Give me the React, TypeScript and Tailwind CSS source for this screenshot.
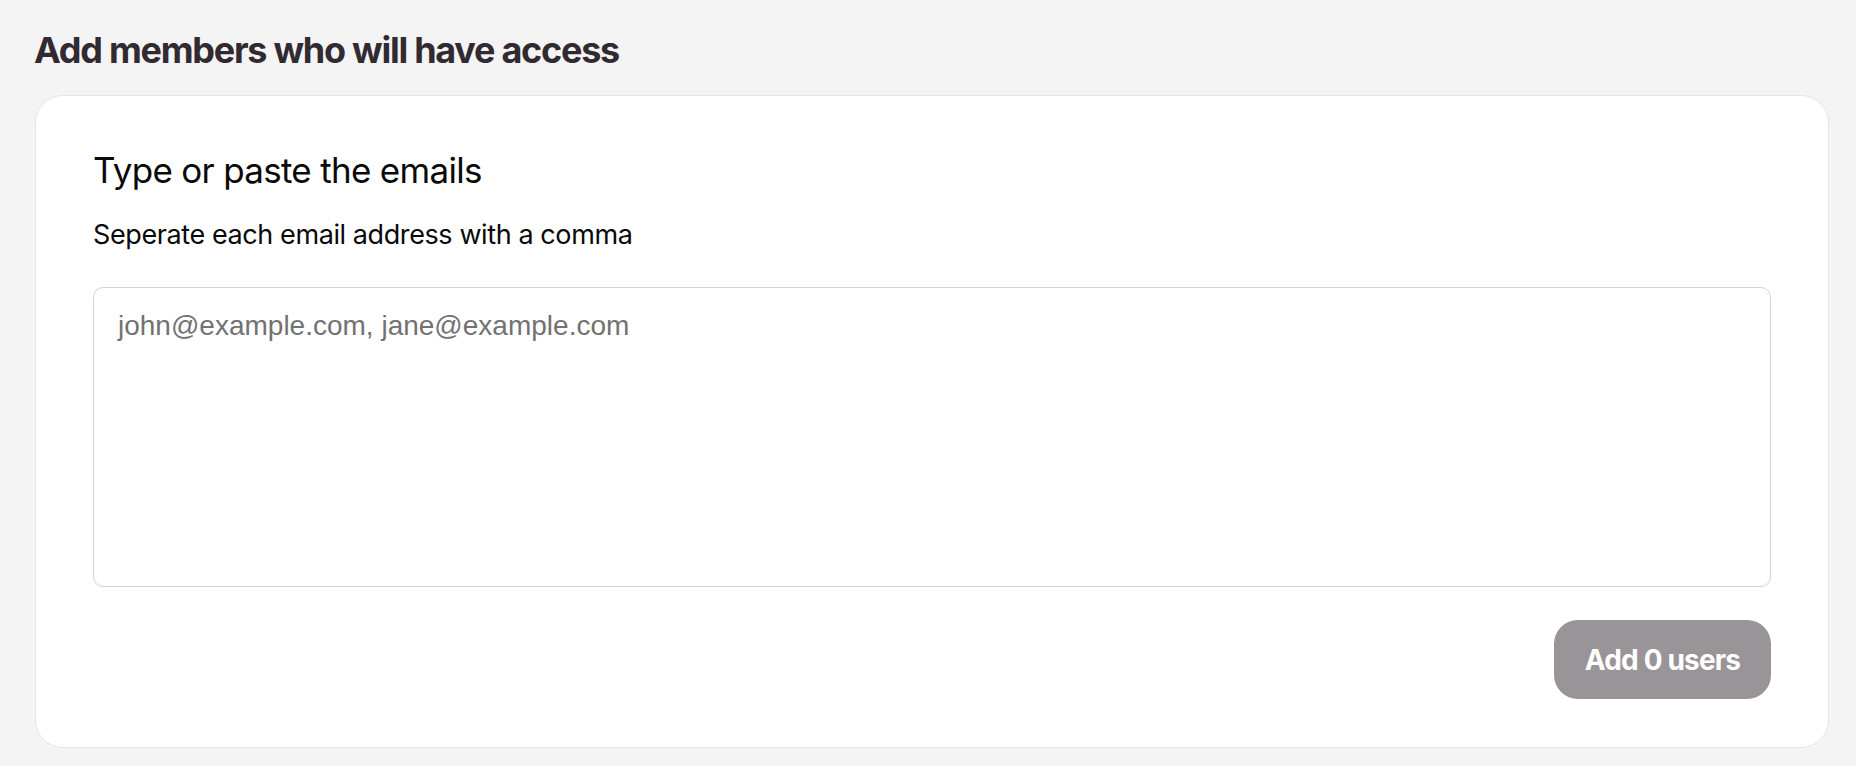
import React from "react";

export default function App() {
  return (
    <div className="min-h-[766px] w-full bg-[#f4f4f4] pt-[32px] pb-[17px]" style={{ fontFamily: "Inter, 'Noto Sans', sans-serif" }}>
      <h1 className="ml-[34px] text-[36px] font-bold leading-[36px] tracking-[-0.035em] text-[#322a31]">
        Add members who will have access
      </h1>
      <div className="ml-[35px] mt-[27px] w-[1794px] rounded-[28px] border border-[#e6e6e6] bg-white px-[57px] pt-[54px] pb-[48px]">
        <h2 className="text-[35px] font-normal leading-[40px] tracking-[-0.02em] text-[#0a0a0a]">
          Type or paste the emails
        </h2>
        <p className="mt-[29px] text-[27px] leading-[32px] tracking-[-0.015em] text-[#0a0a0a]">
          Seperate each email address with a comma
        </p>
        <textarea
          className="mt-[36px] block h-[300px] w-full resize-none rounded-[10px] border-[1.5px] border-[#d4d4d4] bg-white px-[24px] pt-[17px] pb-[12px] text-[28px] leading-[42px] text-[#333] outline-none placeholder:text-[#727272]"
          style={{ fontFamily: "'Liberation Sans', Arial, sans-serif" }}
          placeholder="john@example.com, jane@example.com"
        />
        <div className="mt-[33px] flex justify-end">
          <button className="h-[79px] w-[217px] rounded-[24px] bg-[#999497] text-[28px] font-bold tracking-[-0.03em] text-white">
            Add 0 users
          </button>
        </div>
      </div>
    </div>
  );
}
